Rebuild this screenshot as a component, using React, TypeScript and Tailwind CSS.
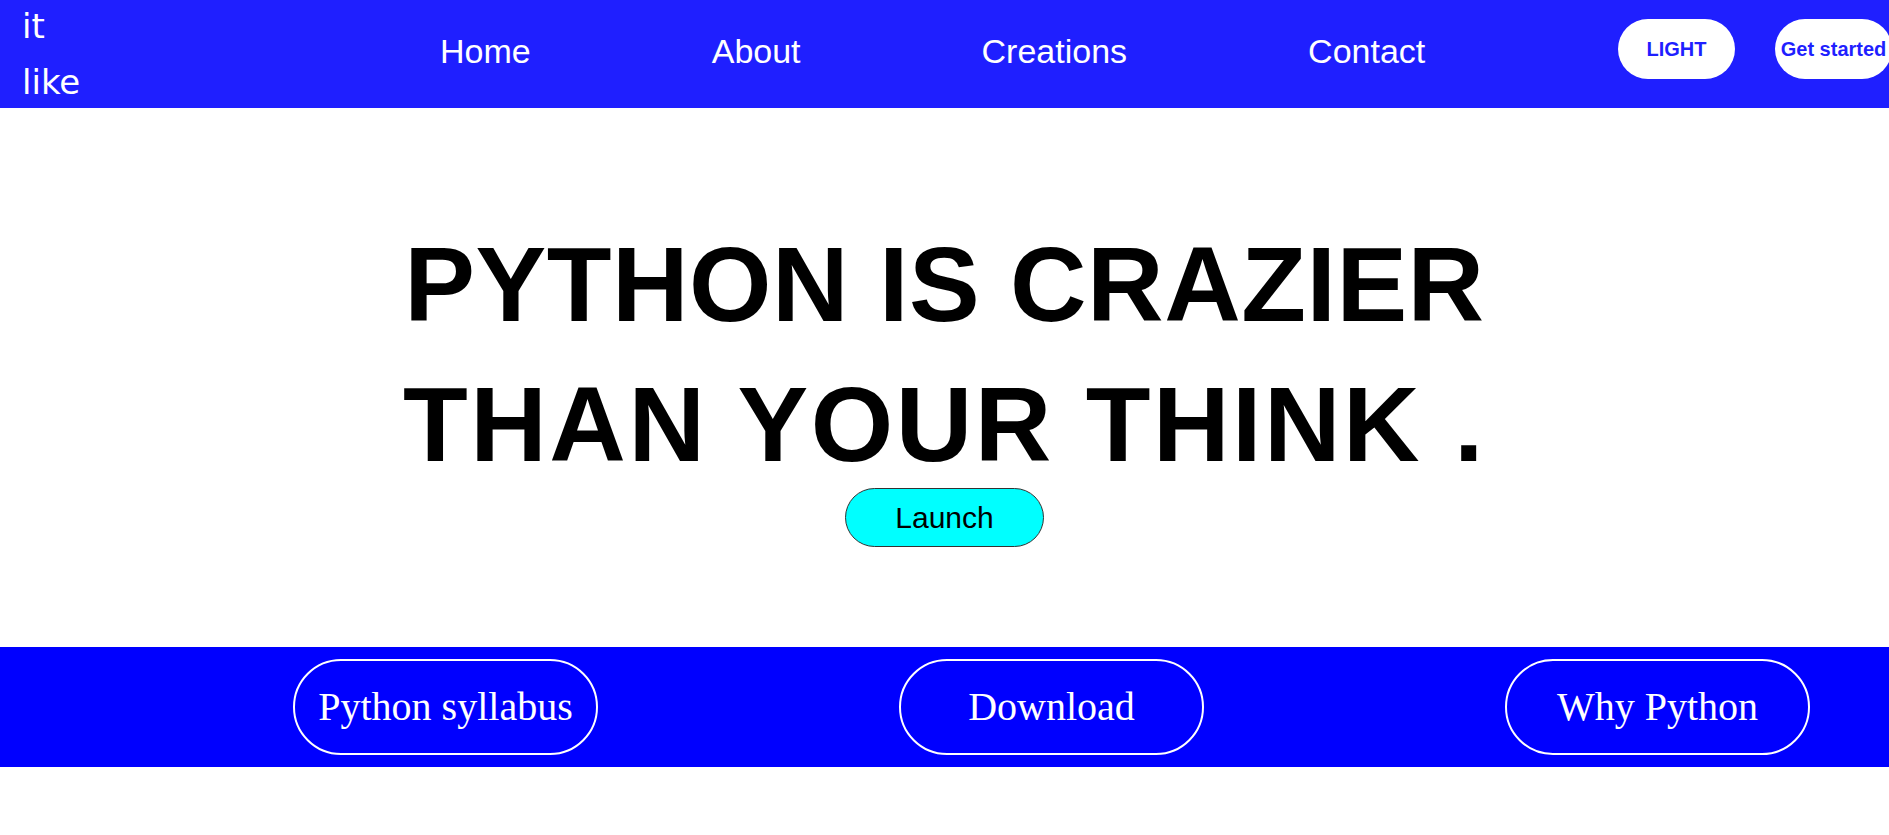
import React from 'react'

const links = ['Home', 'About', 'Creations', 'Contact']
const bandButtons = ['Python syllabus', 'Download', 'Why Python']

const App = () => {
  return (
    <div className="w-full min-h-screen bg-white overflow-hidden">
      {/* Top bar */}
      <nav className="flex items-center h-[108px] w-full bg-[#1f1fff] overflow-hidden">
        <div className="shrink-0 w-[440px] pl-[22px] text-white text-[34px] leading-[56px] font-['Comic_Sans_MS','DejaVu_Sans',sans-serif]">
          it
          <br />
          like
        </div>
        <ul className="shrink-0 flex items-center gap-[181px] w-[1178px] pb-[6px]">
          {links.map((link) => (
            <li
              key={link}
              className="text-white text-[34px] font-['Comic_Sans_MS','Liberation_Sans',sans-serif] cursor-pointer"
            >
              {link}
            </li>
          ))}
        </ul>
        <div className="shrink-0 flex items-center gap-[40px] pb-[10px]">
          <button className="shrink-0 w-[117px] h-[60px] rounded-full bg-white text-[#1f1fff] text-[20px] font-bold font-['Arial','Liberation_Sans',sans-serif]">
            LIGHT
          </button>
          <button className="shrink-0 w-[117px] h-[60px] rounded-full bg-white text-[#1f1fff] text-[20px] font-bold whitespace-nowrap font-['Arial','Liberation_Sans',sans-serif]">
            Get started
          </button>
        </div>
      </nav>

      {/* Hero */}
      <section className="flex flex-col items-center h-[539px] pt-[106px]">
        <h1 className="text-black text-center text-[106px] leading-[140px] font-bold font-['Comic_Sans_MS','Liberation_Sans',sans-serif]">
          <span className="block tracking-[0.5px]">PYTHON IS CRAZIER</span>
          <span className="block tracking-[2.5px]">THAN YOUR THINK .</span>
        </h1>
        <button className="-mt-[6px] w-[199px] h-[59px] rounded-full bg-[#00ffff] border-[1.5px] border-[#333] text-black text-[30px] font-['Comic_Sans_MS','Liberation_Sans',sans-serif]">
          Launch
        </button>
      </section>

      {/* Links band */}
      <div className="flex items-center h-[120px] bg-[#0000ff] pl-[293px] gap-[301px]">
        {bandButtons.map((label) => (
          <button
            key={label}
            className="shrink-0 w-[305px] h-[96px] rounded-full border-2 border-white text-white text-[40px] whitespace-nowrap font-['Times_New_Roman','Liberation_Serif',serif]"
          >
            {label}
          </button>
        ))}
      </div>
    </div>
  )
}

export default App
